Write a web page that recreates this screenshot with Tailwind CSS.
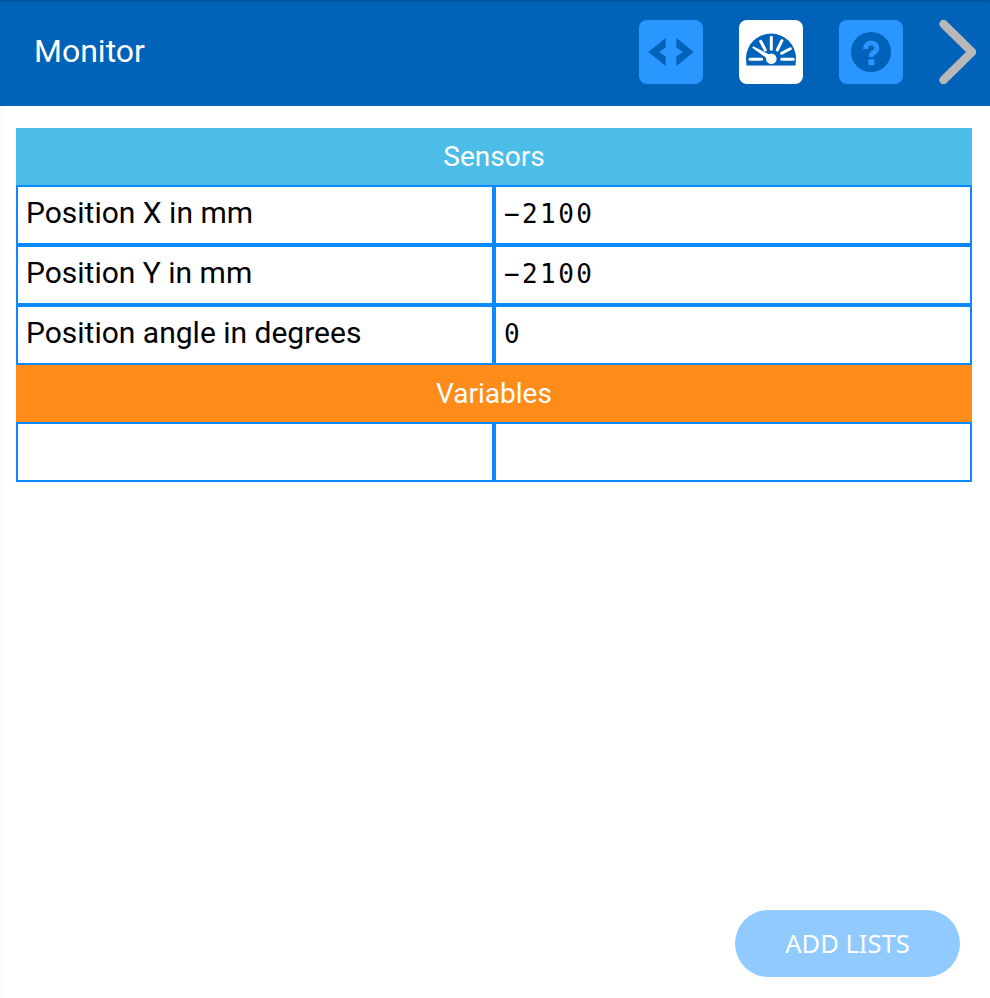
<!DOCTYPE html>
<html lang="en">
<head>
    <meta charset="UTF-8">
    <meta name="viewport" content="width=device-width, initial-scale=1.0">
    <title>Monitor</title>
    <script src="https://cdn.jsdelivr.net/npm/@tailwindcss/browser@4"></script>
</head>
<body class="bg-white h-screen flex flex-col overflow-hidden font-['Roboto',sans-serif]">
    <!-- Header -->
    <header class="h-[106px] shrink-0 bg-[#0062b8] flex items-center pl-[34px] pb-[2px] shadow-[inset_0_3px_3px_-2px_rgba(0,0,0,0.2)]">
        <h1 class="text-[32px] text-white leading-none mb-[2px]">Monitor</h1>
        <div class="ml-auto flex items-center">
            <button class="w-16 h-16 rounded-lg bg-[#2997ff]">
                <svg viewBox="0 0 64 64" class="w-16 h-16">
                    <polygon fill="#0062b8" points="9.3,32 26.7,18 26.7,27.5 20,32 26.7,36.5 26.7,46"/>
                    <polygon fill="#0062b8" points="54.7,32 37.3,18 37.3,27.5 44,32 37.3,36.5 37.3,46"/>
                </svg>
            </button>
            <button class="w-16 h-16 rounded-lg bg-white ml-9">
                <svg viewBox="0 0 64 64" class="w-16 h-16">
                    <path fill="#0062b8" d="M7 38.5A25 25 0 0 1 57 38.5L56.5 45.5L7.5 45.5Z"/>
                    <g stroke="#fff" stroke-width="3" stroke-linecap="round" fill="none">
                        <path d="M11 39.3H22.7M42.7 39.3H54.3"/>
                        <path d="M21.7 21.3L26.3 30M32.3 17.3V29.3M42.9 20.7L38.3 30M51.3 28.7L42.7 33.3"/>
                    </g>
                    <polygon fill="#fff" points="13.2,27.8 14.2,26.2 33,36 31,40.5"/>
                    <circle cx="32.3" cy="38.7" r="5.3" fill="#fff"/>
                </svg>
            </button>
            <button class="w-16 h-16 rounded-lg bg-[#2997ff] ml-9">
                <svg viewBox="0 0 64 64" class="w-16 h-16">
                    <circle cx="32" cy="32" r="20" fill="#0062b8"/>
                    <path d="M26.5 29C26.5 25 29 23 32 23C35.5 23 37.8 25.2 37.8 28C37.8 31 35.5 32 33.8 33.3C32.7 34.2 32.3 35 32.3 37" fill="none" stroke="#2997ff" stroke-width="5"/>
                    <rect x="29.3" y="39.3" width="6" height="6" fill="#2997ff"/>
                </svg>
            </button>
            <svg viewBox="0 0 87 64" class="w-[87px] h-16 overflow-visible">
                <path d="M40.5 4L69 32L40.5 60" fill="none" stroke="#b8b8b8" stroke-width="8.5" stroke-linecap="round" stroke-linejoin="round"/>
            </svg>
        </div>
    </header>

    <!-- Monitor table -->
    <main class="flex-1 relative px-4 pt-[22px] shadow-[inset_5px_0_5px_-3px_rgba(0,0,0,0.03)]">
        <div class="w-[956px] grid grid-cols-2 text-[30px] text-black">
            <div class="col-span-2 h-[57px] bg-[#4bbde8] text-white text-[28px] flex items-center justify-center">Sensors</div>
            <div class="h-[60px] border-2 border-[#0a8aff] pl-2 pb-[5px] flex items-center">Position X in mm</div>
            <div class="h-[60px] border-2 border-[#0a8aff] pl-2 pb-[1px] flex items-center font-['DejaVu_Sans_Mono',monospace] text-[26px] tracking-[2.4px]">−2100</div>
            <div class="h-[60px] border-2 border-[#0a8aff] pl-2 pb-[5px] flex items-center">Position Y in mm</div>
            <div class="h-[60px] border-2 border-[#0a8aff] pl-2 pb-[1px] flex items-center font-['DejaVu_Sans_Mono',monospace] text-[26px] tracking-[2.4px]">−2100</div>
            <div class="h-[60px] border-2 border-[#0a8aff] pl-2 pb-[5px] flex items-center">Position angle in degrees</div>
            <div class="h-[60px] border-2 border-[#0a8aff] pl-2 pb-[1px] flex items-center font-['DejaVu_Sans_Mono',monospace] text-[26px] tracking-[2.4px]">0</div>
            <div class="col-span-2 h-[57px] bg-[#ff8c1a] text-white text-[28px] flex items-center justify-center">Variables</div>
            <div class="h-[60px] border-2 border-[#0a8aff]"></div>
            <div class="h-[60px] border-2 border-[#0a8aff]"></div>
        </div>

        <button class="absolute left-[735px] top-[804px] w-[225px] h-[67px] rounded-full bg-[#90caff] text-white text-[25.5px] font-['Noto_Sans',sans-serif]">ADD LISTS</button>
    </main>
</body>
</html>
